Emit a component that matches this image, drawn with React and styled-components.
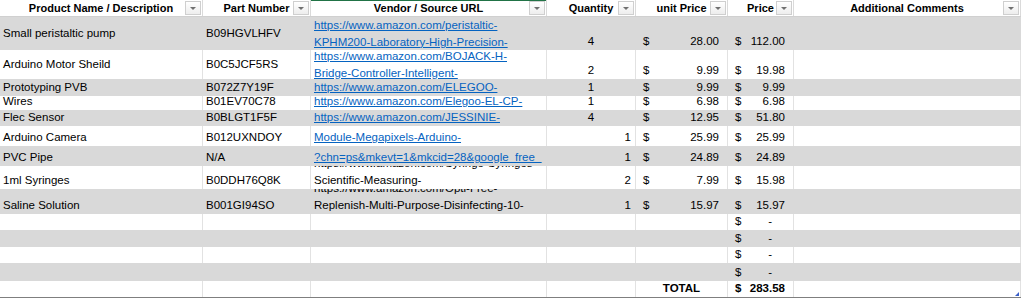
import styled, { createGlobalStyle } from "styled-components";

const COLS = "203px 108px 236px 89px 92px 66px 227px";
const STRIPE = "#d9d9d9";
const GRID = "#e2e2e2";

const GlobalStyle = createGlobalStyle`
    body {
        margin: 0;
        background: #fff;
        font-family: "Liberation Sans", Arial, sans-serif;
        font-size: 11.5px;
        color: #000;
    }
`;

const Sheet = styled.div`
    display: flex;
    flex-direction: column;
    width: 1021px;
    border-bottom: 1px solid #7f7f7f;
`;

const Row = styled.div`
    display: grid;
    grid-template-columns: ${COLS};
    height: ${(p) => p.$h}px;
    background: ${(p) => (p.$shade ? STRIPE : "#fff")};
`;

const HeaderRow = styled(Row)`
    height: 16px;
    border-bottom: 1px solid #d0d0d0;
    background: #fff;
`;

const HeadCell = styled.div`
    display: grid;
    grid-template-columns: 1fr;
    border-right: 1px solid #dadada;
    box-shadow: ${(p) => (p.$active ? "inset 0 1px 0 #217346" : "none")};
`;

const HeadLabel = styled.span`
    grid-area: 1 / 1;
    justify-self: center;
    align-self: center;
    font-weight: 700;
    font-size: 11px;
    line-height: 16px;
    white-space: nowrap;
`;

const FilterButton = styled.span`
    grid-area: 1 / 1;
    justify-self: end;
    align-self: start;
    display: flex;
    align-items: center;
    justify-content: center;
    width: 16px;
    height: 14px;
    margin: 1px 1px 0 0;
    box-sizing: border-box;
    border: 1px solid #cfcfcf;
    background: linear-gradient(#ffffff, #ededed);

    &::after {
        content: "";
        border-left: 3px solid transparent;
        border-right: 3px solid transparent;
        border-top: 3px solid #707070;
    }
`;

const Cell = styled.div`
    display: flex;
    align-items: ${(p) => (p.$middle ? "center" : "flex-end")};
    justify-content: ${(p) => p.$align || "flex-start"};
    padding: ${(p) => (p.$align === "flex-end" ? "0 4px 0 3px" : "0 3px")};
    border-right: 1px solid ${(p) => (p.$shade ? STRIPE : GRID)};
    overflow: hidden;
    white-space: nowrap;
    line-height: 17px;
    font-weight: ${(p) => (p.$bold ? 700 : 400)};
`;

// wrapped text: lines that do not fit are cut off at the top, like Excel does
const UrlCell = styled(Cell)`
    flex-direction: column;
    justify-content: ${(p) => (p.$middle ? "center" : "flex-end")};
    align-items: flex-start;
`;

const UrlLine = styled.span`
    display: block;
    flex-shrink: 0;
    color: ${(p) => (p.$link ? "#0563c1" : "#000")};
    text-decoration: ${(p) => (p.$link ? "underline" : "none")};
    text-decoration-thickness: 1px;
`;

const Money = styled(Cell)`
    justify-content: space-between;
    padding: 0 8px 0 7px;
`;

const Dash = styled.span`
    margin-right: 13px;
`;

const LastCell = styled(Cell)`
    display: grid;
    grid-template-columns: 1fr;
    grid-template-rows: 1fr;
    padding: 0;
`;

const Handle = styled.span`
    justify-self: end;
    align-self: end;
    margin: 0 1px 1px 0;
    width: 0;
    height: 0;
    border-left: 4px solid transparent;
    border-bottom: 4px solid #3a5fc8;
`;

const headers = [
    "Product Name / Description",
    "Part Number",
    "Vendor / Source URL",
    "Quantity",
    "unit Price",
    "Price",
    "Additional Comments",
];

const items = [
    { h: 33, name: "Small peristaltic pump", part: "B09HGVLHFV", url: ["https://www.amazon.com/peristaltic-", "KPHM200-Laboratory-High-Precision-"], link: true, qty: 4, unit: "28.00", price: "112.00", middle: true },
    { h: 29, name: "Arduino Motor Sheild", part: "B0C5JCF5RS", url: ["https://www.amazon.com/BOJACK-H-", "Bridge-Controller-Intelligent-"], link: true, qty: 2, unit: "9.99", price: "19.98", middle: true },
    { h: 17, name: "Prototyping PVB", part: "B072Z7Y19F", url: ["https://www.amazon.com/ELEGOO-"], link: true, qty: 1, unit: "9.99", price: "9.99" },
    { h: 14, name: "Wires", part: "B01EV70C78", url: ["https://www.amazon.com/Elegoo-EL-CP-"], link: true, qty: 1, unit: "6.98", price: "6.98" },
    { h: 16, name: "Flec Sensor", part: "B0BLGT1F5F", url: ["https://www.amazon.com/JESSINIE-"], link: true, qty: 4, unit: "12.95", price: "51.80" },
    { h: 20, name: "Arduino Camera", part: "B012UXNDOY", url: ["Module-Megapixels-Arduino-"], link: true, qty: 1, unit: "25.99", price: "25.99", right: true },
    { h: 20, name: "PVC Pipe", part: "N/A", url: ["?chn=ps&mkevt=1&mkcid=28&google_free_"], link: true, qty: 1, unit: "24.89", price: "24.89", right: true },
    { h: 23, name: "1ml Syringes", part: "B0DDH76Q8K", url: ["https://www.amazon.com/Syringe-Syringes-", "Scientific-Measuring-"], qty: 2, unit: "7.99", price: "15.98", right: true },
    { h: 25, name: "Saline Solution", part: "B001GI94SO", url: ["https://www.amazon.com/Opti-Free-", "Replenish-Multi-Purpose-Disinfecting-10-"], qty: 1, unit: "15.97", price: "15.97", right: true },
];

const blanks = [16, 17, 16, 18];

const Amount = ({ value, shade, bold }) => (
    <Money $shade={shade} $bold={bold}>
        <span>$</span>
        {value ? <span>{value}</span> : <Dash>-</Dash>}
    </Money>
);

const ItemRow = ({ item, shade }) => (
    <Row $h={item.h} $shade={shade}>
        <Cell $shade={shade} $middle={item.middle}>{item.name}</Cell>
        <Cell $shade={shade} $middle={item.middle}>{item.part}</Cell>
        <UrlCell $shade={shade} $middle={item.middle}>
            {item.url.map((line) => (
                <UrlLine key={line} $link={item.link}>{line}</UrlLine>
            ))}
        </UrlCell>
        <Cell $shade={shade} $align={item.right ? "flex-end" : "center"}>{item.qty}</Cell>
        <Amount value={item.unit} shade={shade} />
        <Amount value={item.price} shade={shade} />
        <Cell $shade={shade} />
    </Row>
);

const App = () => (
    <>
        <GlobalStyle />
        <Sheet>
            <HeaderRow>
                {headers.map((h) => (
                    <HeadCell key={h} $active={h === "Vendor / Source URL"}>
                        <HeadLabel>{h}</HeadLabel>
                        <FilterButton />
                    </HeadCell>
                ))}
            </HeaderRow>
            {items.map((item, i) => (
                <ItemRow key={item.name} item={item} shade={i % 2 === 0} />
            ))}
            {blanks.map((h, i) => {
                const shade = i % 2 === 1;
                return (
                    <Row key={i} $h={h} $shade={shade}>
                        <Cell $shade={shade} />
                        <Cell $shade={shade} />
                        <Cell $shade={shade} />
                        <Cell $shade={shade} />
                        <Cell $shade={shade} />
                        <Amount shade={shade} />
                        <Cell $shade={shade} />
                    </Row>
                );
            })}
            <Row $h={16}>
                <Cell />
                <Cell />
                <Cell />
                <Cell />
                <Cell $align="center" $bold>TOTAL</Cell>
                <Amount value="283.58" bold />
                <LastCell>
                    <Handle />
                </LastCell>
            </Row>
        </Sheet>
    </>
);

export default App;
